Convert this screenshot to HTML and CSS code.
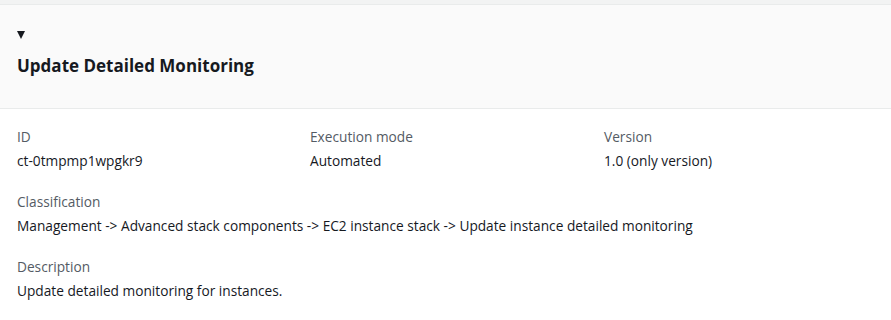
FILE: index.html
```html
<!DOCTYPE html>
<html>
<head>
<meta charset="utf-8">
<link rel="stylesheet" href="styles.css">
</head>
<body>
<div class="strip"></div>
<section class="panel">
  <header class="panel-head">
    <div class="caret"></div>
    <h2 class="title">Update Detailed Monitoring</h2>
  </header>
  <div class="panel-body">
    <div class="cols">
      <div class="field">
        <div class="label">ID</div>
        <div class="value">ct-0tmpmp1wpgkr9</div>
      </div>
      <div class="field">
        <div class="label">Execution mode</div>
        <div class="value">Automated</div>
      </div>
      <div class="field">
        <div class="label">Version</div>
        <div class="value">1.0 (only version)</div>
      </div>
    </div>
    <div class="field">
      <div class="label">Classification</div>
      <div class="value">Management -&gt; Advanced stack components -&gt; EC2 instance stack -&gt; Update instance detailed monitoring</div>
    </div>
    <div class="field">
      <div class="label">Description</div>
      <div class="value">Update detailed monitoring for instances.</div>
    </div>
  </div>
</section>
</body>
</html>
```
FILE: styles.css
```css
html, body {
  margin: 0;
  padding: 0;
  background: #ffffff;
  font-family: "Open Sans", "Noto Sans", sans-serif;
  color: #16191f;
}
.strip {
  height: 4px;
  background: #f2f3f3;
}
.panel {
  border-top: 1px solid #e9ebeb;
}
.panel-head {
  background: #fafafa;
  border-bottom: 1px solid #e9ebeb;
  padding: 26px 17px 0;
  height: 77px;
}
.caret {
  width: 0;
  height: 0;
  border-left: 4.5px solid transparent;
  border-right: 4.5px solid transparent;
  border-top: 8px solid #16191f;
  margin-top: 0;
}
.title {
  margin: 16px 0 0;
  font-size: 17px;
  font-weight: 700;
  line-height: 22px;
  color: #16191f;
}
.panel-body {
  padding: 17px 17px 0;
  display: flex;
  flex-direction: column;
  gap: 19px;
}
.cols {
  display: grid;
  grid-template-columns: 293px 294px 1fr;
}
.field {
  display: flex;
  flex-direction: column;
  gap: 2px;
}
.label {
  font-size: 13.7px;
  line-height: 22px;
  color: #545b64;
}
.value {
  font-size: 13.7px;
  line-height: 22px;
  color: #16191f;
}
```
